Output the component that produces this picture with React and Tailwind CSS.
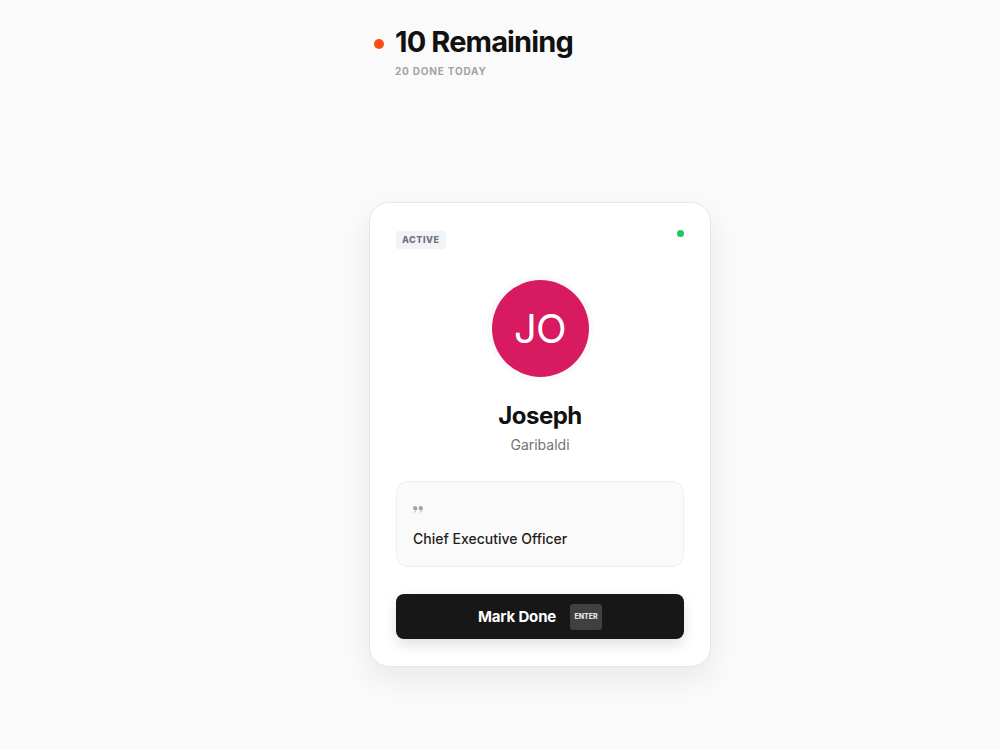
import React from 'react'

const ff = { fontFamily: 'Inter, "Noto Sans", sans-serif' }

const QueueHeader = ({ remaining, done }) => (
  <div className="flex items-start gap-[11px] pl-[5px]">
    <span className="mt-[15px] h-[10px] w-[10px] rounded-full bg-[#ff4d12]" />
    <div className="flex flex-col">
      <h1 className="text-[29px] font-bold leading-[36px] tracking-[-0.03em] text-[#111]">
        {remaining} Remaining
      </h1>
      <p className="mt-[4px] text-[10px] font-bold uppercase tracking-[0.08em] text-[#a3a3a3]">
        {done} done today
      </p>
    </div>
  </div>
)

// small closing-quote mark above the title
const QuoteMark = () => (
  <svg width="11" height="7" viewBox="0 0 11 7" className="block">
    <g fill="#a3a3a3">
      <circle cx="2.2" cy="2.2" r="2.1" />
      <path d="M3.6 2.6 C3.8 4.6 2.8 6 1.2 6.8 L1 6.2 C2.2 5.4 2.8 4.4 2.6 3.2 Z" />
      <circle cx="7.8" cy="2.2" r="2.1" />
      <path d="M9.2 2.6 C9.4 4.6 8.4 6 6.8 6.8 L6.6 6.2 C7.8 5.4 8.4 4.4 8.2 3.2 Z" />
    </g>
  </svg>
)

const ContactCard = () => (
  <div className="rounded-[20px] border border-[#e6e6e6] bg-white px-[26px] pt-[28px] pb-[27px] shadow-[0_12px_30px_rgba(0,0,0,0.07)]">
    <div className="flex items-start justify-between">
      <span className="rounded-[3px] bg-[#f1f3f5] px-[6px] py-[3px] text-[9px] font-extrabold uppercase leading-[12px] tracking-[0.06em] text-[#6b7280]">
        Active
      </span>
      <span className="-mt-[1px] h-[7px] w-[7px] rounded-full bg-[#22c55e]" />
    </div>

    <div className="mt-[31px] flex flex-col items-center">
      <div className="flex h-[97px] w-[97px] items-center justify-center rounded-full bg-[#d81b60] shadow-[0_0_0_5px_#fafafa]">
        <span className="text-[40px] font-normal leading-none tracking-[-0.02em] text-white">JO</span>
      </div>
      <h2 className="mt-[24px] text-[24px] font-bold leading-[30px] tracking-[-0.02em] text-[#111]">Joseph</h2>
      <p className="mt-[5px] text-[14px] leading-[18px] text-[#737373]">Garibaldi</p>
    </div>

    <div className="mt-[27px] rounded-[12px] border border-[#efefef] bg-[#fafafa] px-[16px] pt-[24px] pb-[17px]">
      <QuoteMark />
      <p className="mt-[16px] text-[14px] font-medium leading-[20px] text-[#1f1f1f]">Chief Executive Officer</p>
    </div>

    <button className="mt-[27px] flex h-[45px] w-full items-center justify-center gap-[14px] rounded-[8px] bg-[#171717] pt-[1px] shadow-[0_6px_14px_rgba(0,0,0,0.12)]">
      <span className="text-[15px] font-bold tracking-[-0.01em] text-white">Mark Done</span>
      <kbd className="flex h-[26px] w-[32px] items-center justify-center rounded-[3px] bg-[#404040] text-[7px] font-extrabold text-[#e5e5e5]" style={ff}>
        ENTER
      </kbd>
    </button>
  </div>
)

export default function App() {
  return (
    <div className="min-h-[750px] w-full bg-[#fafafa]" style={ff}>
      <div className="ml-[369px] flex w-[342px] flex-col pt-[24px]">
        <QueueHeader remaining={10} done={20} />
        <div className="mt-[123px]">
          <ContactCard />
        </div>
      </div>
    </div>
  )
}
